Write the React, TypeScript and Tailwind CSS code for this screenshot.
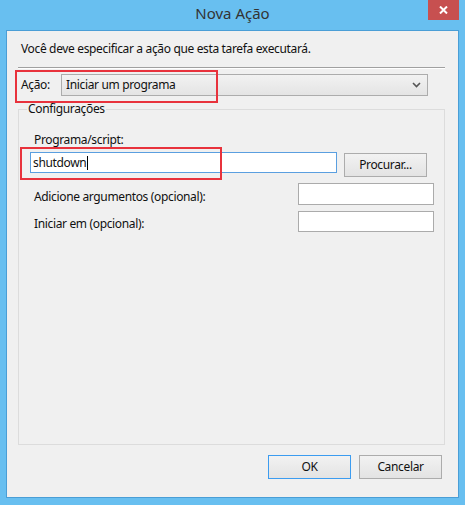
import React from "react";

const font = { fontFamily: '"Noto Sans", "Open Sans", sans-serif' };

function ChevronDown() {
  return (
    <svg width="9" height="6" viewBox="0 0 9 6" className="text-[#555]">
      <path d="M1 1 L4.5 4.5 L8 1" fill="none" stroke="currentColor" strokeWidth="1.6" />
    </svg>
  );
}

function Btn({ label, focused }: { label: string; focused?: boolean }) {
  return (
    <div
      className={
        "flex h-[24px] w-[83px] items-center justify-center border bg-gradient-to-b from-[#f2f2f2] to-[#e3e3e3] text-[12px] text-[#111] " +
        (focused ? "border-[#3c9cf0]" : "border-[#acacac]")
      }
    >
      {label}
    </div>
  );
}

export default function App() {
  return (
    <div
      className="flex h-[505px] w-[465px] flex-col bg-[#68bff0] px-[6px] pb-[7px] text-[12px] tracking-[-0.35px] text-[#111]"
      style={font}
    >
      {/* title bar */}
      <div className="relative flex h-[30px] shrink-0 items-center justify-center">
        <span className="pb-[3px] text-[15px] tracking-normal text-[#333]">Nova Ação</span>
        <div className="absolute right-0 top-0 flex h-[20px] w-[31px] items-center justify-center bg-[#c75050]">
          <svg width="9" height="8" viewBox="0 0 9 8">
            <path d="M1 0.5 L8 7.5 M8 0.5 L1 7.5" stroke="#fff" strokeWidth="2" />
          </svg>
        </div>
      </div>

      {/* client area */}
      <div className="flex flex-1 flex-col border border-[#4a9ed6] bg-[#f0f0f0]">
        <div className="ml-[14px] mt-[10px] h-[16px] leading-[16px]">
          Você deve especificar a ação que esta tarefa executará.
        </div>
        <div className="ml-[11px] mr-[13px] mt-[10px] h-[2px] border-t border-b border-t-[#a0a0a0] border-b-white" />

        {/* action row */}
        <div className="relative ml-[14px] mt-[5px] flex h-[22px] items-center">
          <span className="w-[40px] leading-[16px]">Ação:</span>
          <div className="flex h-[22px] w-[367px] items-center justify-between border border-[#acacac] bg-gradient-to-b from-[#f2f2f2] to-[#e4e4e4] pl-[4px] pr-[6px]">
            <span>Iniciar um programa</span>
            <ChevronDown />
          </div>
          <div className="pointer-events-none absolute left-[-6px] top-[-4px] h-[33px] w-[203px] border-2 border-[#e8323c]" />
        </div>

        {/* settings group */}
        <fieldset className="mb-0 ml-[11px] mr-[13px] mt-[5px] flex-1 border border-[#dcdcdc] pl-[11px]">
          <legend className="ml-[-3px] px-[1px] leading-[16px]">Configurações</legend>
          <div className="ml-[4px] mt-[15px] leading-[16px]">Programa/script:</div>
          <div className="relative mt-[4px] flex items-start">
            <div className="flex h-[21px] w-[307px] items-center border border-[#5a9fe0] bg-white pl-[2px]">
              <span>shutdown</span>
              <span className="ml-[1px] h-[14px] w-[1px] bg-black" />
            </div>
            <div className="ml-[7px] mt-[1px]">
              <Btn label="Procurar..." />
            </div>
            <div className="pointer-events-none absolute left-[-10px] top-[-5px] h-[33px] w-[202px] border-2 border-[#e8323c]" />
          </div>

          <div className="mt-[6px] flex items-center">
            <span className="ml-[4px] w-[264px] pt-[5px] leading-[16px]">Adicione argumentos (opcional):</span>
            <div className="h-[22px] w-[136px] border border-[#ababab] bg-white" />
          </div>
          <div className="mt-[6px] flex items-center">
            <span className="ml-[4px] w-[264px] pt-[5px] leading-[16px]">Iniciar em (opcional):</span>
            <div className="h-[21px] w-[136px] border border-[#ababab] bg-white" />
          </div>
        </fieldset>

        {/* buttons */}
        <div className="mb-[18px] mr-[16px] mt-[10px] flex justify-end gap-[8px]">
          <Btn label="OK" focused />
          <Btn label="Cancelar" />
        </div>
      </div>
    </div>
  );
}
